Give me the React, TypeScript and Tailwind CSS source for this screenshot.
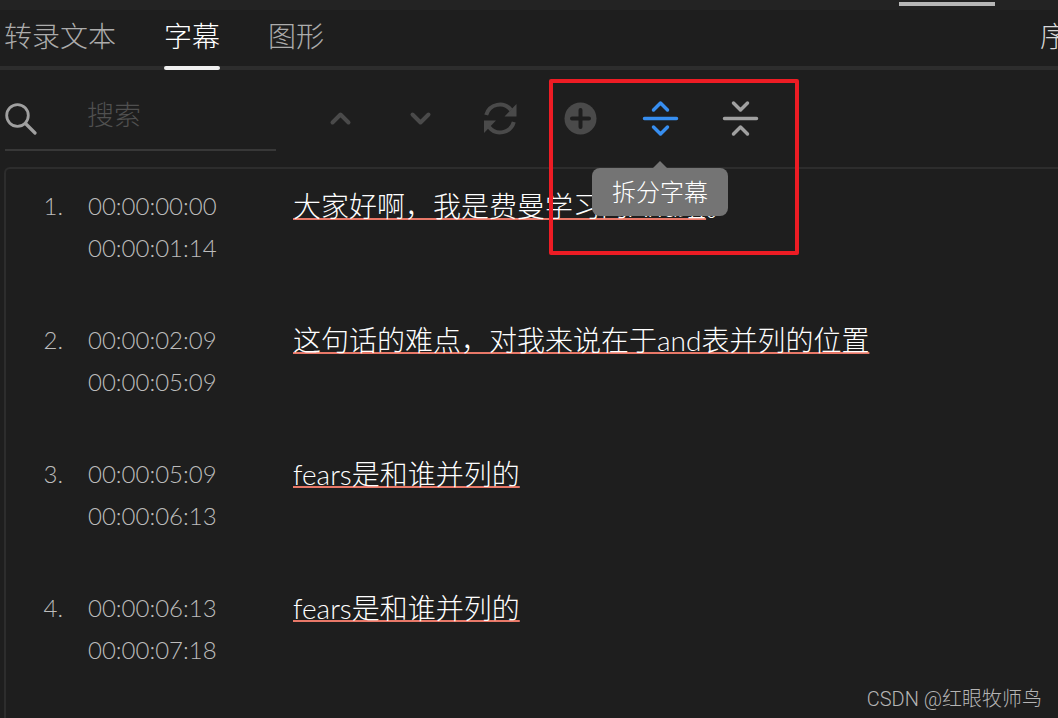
import type { ReactNode } from "react";
import clsx from "clsx";

const tabs = ["转录文本", "字幕", "图形"];

const captions = [
  { start: "00:00:00:00", end: "00:00:01:14", text: "大家好啊，我是费曼学习的And组", tail: "。" },
  { start: "00:00:02:09", end: "00:00:05:09", text: "这句话的难点，对我来说在于and表并列的位置" },
  { start: "00:00:05:09", end: "00:00:06:13", text: "fears是和谁并列的" },
  { start: "00:00:06:13", end: "00:00:07:18", text: "fears是和谁并列的" },
];

function ToolButton({ label, className, children }: { label: string; className: string; children: ReactNode }) {
  return (
    <button type="button" aria-label={label} className={clsx("flex h-10 w-20 items-center justify-center", className)}>
      <svg
        viewBox="0 0 40 40"
        className="h-10 w-10"
        fill="none"
        stroke="currentColor"
        strokeWidth="4"
        strokeLinecap="round"
        strokeLinejoin="round"
      >
        {children}
      </svg>
    </button>
  );
}

function Toolbar() {
  return (
    <div className="flex px-[5px] pt-2.5">
      <label className="flex h-[71px] w-[271px] items-center border-b-2 border-[#383838]">
        <svg viewBox="0 0 32 32" className="mt-2 h-8 w-8 shrink-0 text-[#a0a0a0]" fill="none" stroke="currentColor" strokeLinecap="round">
          <circle cx="12.5" cy="12.5" r="10.8" strokeWidth="2.8" />
          <path d="M20.5 20.5 30 30" strokeWidth="3.2" />
        </svg>
        <input
          type="search"
          aria-label="搜索"
          placeholder="搜索"
          className="ml-[50px] w-40 bg-transparent text-[27px] leading-10 font-light text-[#d0d0d0] outline-none placeholder:text-[#505050]"
        />
      </label>

      <div className="ml-6 flex pt-[18px]">
        <ToolButton label="上一个" className="text-[#4a4a4a]">
          <path d="m12.5 24.5 8-8 8 8" />
        </ToolButton>
        <ToolButton label="下一个" className="text-[#4a4a4a]">
          <path d="m12.5 16.5 8 8 8-8" />
        </ToolButton>
        <ToolButton label="刷新" className="text-[#4a4a4a]">
          <g strokeLinecap="butt">
            <path d="M6.2 17A14.2 14.2 0 0 1 31 12" />
            <path d="M33.8 24A14.2 14.2 0 0 1 9 29" />
          </g>
          <path d="M36.5 6v12.5H24.5Z M4 35V22.5H16Z" fill="currentColor" stroke="none" />
        </ToolButton>

        <div className="relative flex">
          <ToolButton label="添加字幕" className="text-[#4a4a4a]">
            <circle cx="20.5" cy="20.5" r="16" fill="currentColor" stroke="none" />
            <path d="M20.5 12v17M12 20.5h17" stroke="#1e1e1e" />
          </ToolButton>
          <div className="relative">
            <ToolButton label="拆分字幕" className="text-[#378ef0]">
              <path d="m13.5 12 7-7 7 7M4.5 20.5h32M13.5 29l7 7 7-7" strokeWidth="3.5" />
            </ToolButton>
            <div role="tooltip" className="absolute top-[63px] left-1/2 z-10 -translate-x-1/2">
              <svg viewBox="0 0 14 7" className="mx-auto h-[7px] w-3.5">
                <path d="M0 7 7 0l7 7Z" fill="#747474" />
              </svg>
              <div className="rounded-lg bg-[#747474] px-5 text-2xl leading-[48px] whitespace-nowrap text-white">
                拆分字幕
              </div>
            </div>
          </div>
          <ToolButton label="合并字幕" className="text-[#a0a0a0]">
            <path d="m13.5 5 7 7 7-7M4.5 20.5h32M13.5 36l7-7 7 7" strokeWidth="3.5" />
          </ToolButton>
          {/* Highlight around the caption editing tools */}
          <div className="pointer-events-none absolute -top-[19px] left-[9px] z-20 h-44 w-[250px] rounded-xs border-4 border-[#ed1c24]" />
        </div>
      </div>
    </div>
  );
}

export default function App() {
  return (
    <div className="relative flex min-h-screen flex-col overflow-hidden bg-[#1e1e1e] font-['Lato','Noto_Sans_CJK_SC',sans-serif] font-light text-[#bcbcbc]">
      <div className="flex h-2.5 justify-end bg-[#232323] pt-0.5 pr-[63px]">
        <div className="h-1 w-24 bg-[#b8b8b8]" />
      </div>

      <nav className="flex h-[60px] gap-12 border-b-4 border-[#2d2d2d] pl-1 text-[28px] leading-[52px]">
        {tabs.map((tab) => (
          <button
            key={tab}
            type="button"
            className={clsx("relative h-14 pb-1 whitespace-nowrap", tab === "字幕" ? "text-white" : "text-[#acacac]")}
          >
            {tab}
            {tab === "字幕" && <span className="absolute inset-x-0 top-full h-1 rounded-full bg-[#f0f0f0]" />}
          </button>
        ))}
        <button type="button" className="-mr-2.5 ml-auto h-14 shrink-0 pb-1 text-[#d8d8d8]">
          序
        </button>
      </nav>

      <Toolbar />

      <ol className="mt-4 ml-1 flex flex-1 flex-col gap-[50px] rounded-tl-md border-t-2 border-l-2 border-[#2d2d2d] pt-4 pb-11 text-2xl leading-[42px]">
        {captions.map((caption, i) => (
          <li key={i} className="flex">
            <span className="w-[57px] shrink-0 text-right">{i + 1}.</span>
            <div className="ml-[25px] flex w-[205px] shrink-0 flex-col">
              <time>{caption.start}</time>
              <time>{caption.end}</time>
            </div>
            <p className="text-[28px] whitespace-nowrap text-white">
              <span className="underline underline-offset-1 [text-decoration-color:#e87868] [text-decoration-skip-ink:none] [text-decoration-thickness:2px]">
                {caption.text}
              </span>
              {caption.tail}
            </p>
          </li>
        ))}
      </ol>

      <div className="absolute right-4 bottom-[5px] font-['Roboto','Noto_Sans_CJK_SC',sans-serif] text-xl leading-7 text-[#b5b5b5]">
        CSDN @红眼牧师鸟
      </div>
    </div>
  );
}
